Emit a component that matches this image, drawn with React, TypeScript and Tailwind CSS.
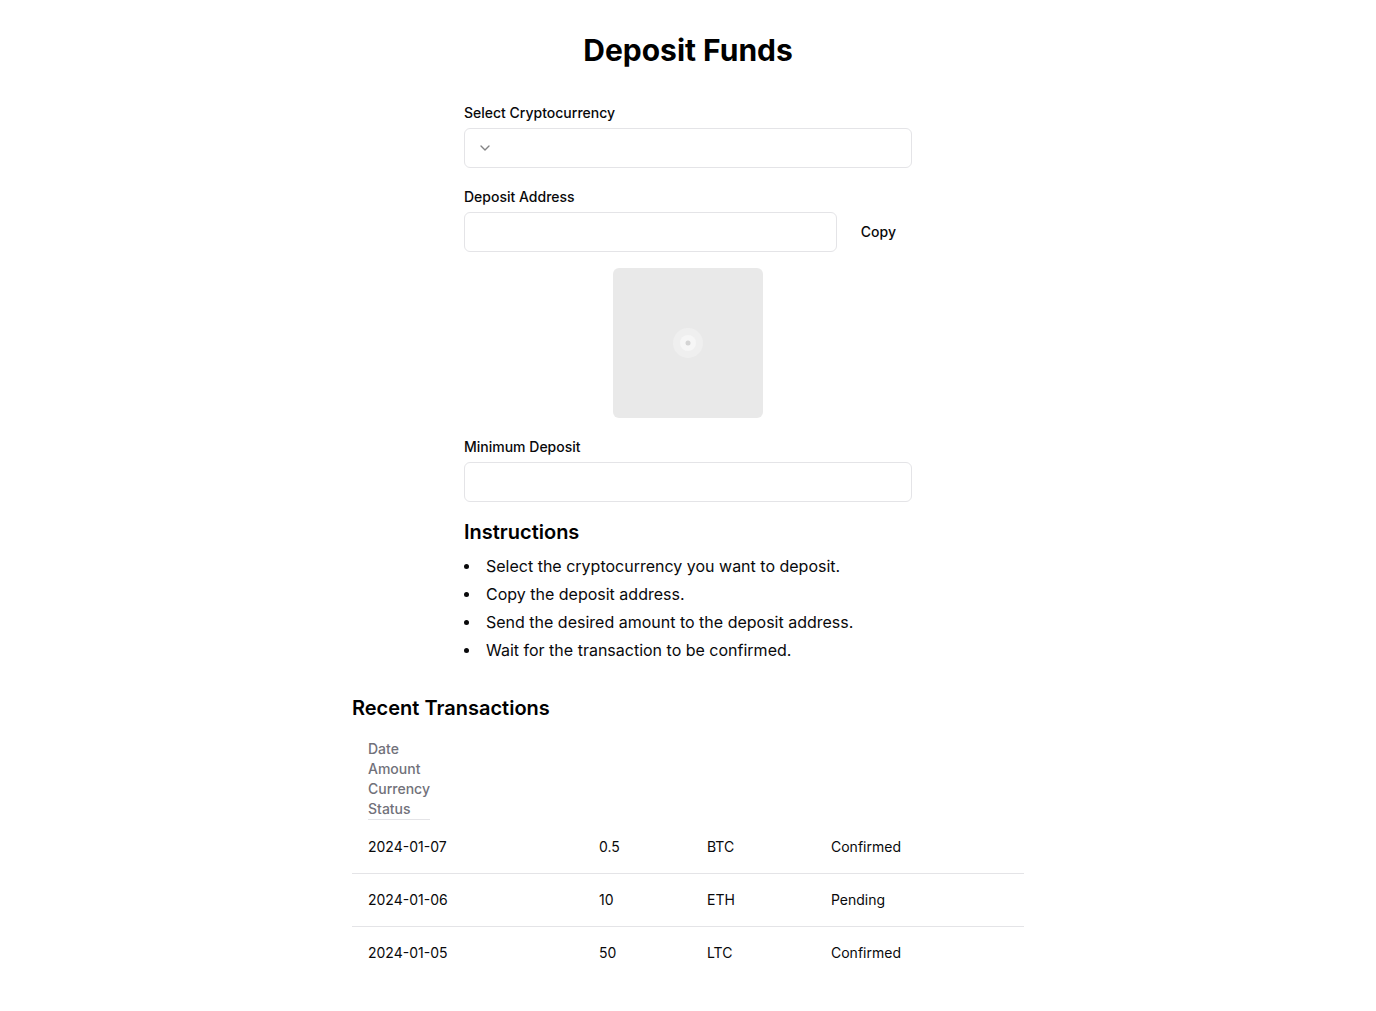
import React from 'react';
import { ChevronDown } from 'lucide-react';

const transactions = [
  { date: '2024-01-07', amount: '0.5', currency: 'BTC', status: 'Confirmed' },
  { date: '2024-01-06', amount: '10', currency: 'ETH', status: 'Pending' },
  { date: '2024-01-05', amount: '50', currency: 'LTC', status: 'Confirmed' },
];

const steps = [
  'Select the cryptocurrency you want to deposit.',
  'Copy the deposit address.',
  'Send the desired amount to the deposit address.',
  'Wait for the transaction to be confirmed.',
];

const Label: React.FC<{ children: React.ReactNode; first?: boolean }> = ({ children, first }) => (
  <label className={`block text-sm leading-5 font-medium text-[#09090b] mb-[5px] ${first ? '' : 'mt-[19px]'}`}>
    {children}
  </label>
);

export default function App() {
  return (
    <div className="min-h-screen bg-white text-[#09090b] font-['Inter','Noto_Sans',sans-serif] pt-8 pb-10">
      <h1 className="text-3xl leading-9 font-bold text-center text-black">Deposit Funds</h1>

      <div className="w-[448px] mx-auto mt-[35px] flex flex-col">
        <Label first>Select Cryptocurrency</Label>
        <button className="h-10 w-full rounded-md border border-[#e4e4e7] bg-white px-3 flex items-center">
          <ChevronDown className="w-4 h-4 text-[#09090b] opacity-50" />
        </button>

        <Label>Deposit Address</Label>
        <div className="flex items-center gap-2">
          <input readOnly className="h-10 flex-1 rounded-md border border-[#e4e4e7] bg-white px-3 text-sm outline-none" />
          <button className="h-10 px-4 rounded-md text-sm font-medium text-[#09090b]">Copy</button>
        </div>

        <div className="mt-4 self-center w-[150px] h-[150px] rounded-md bg-[#e9e9e9] flex items-center justify-center">
          <svg width="34" height="34" viewBox="0 0 34 34">
            <circle cx="17" cy="17" r="15" fill="#efefef" />
            <circle cx="17" cy="17" r="8" fill="#f6f6f6" />
            <circle cx="17" cy="17" r="2.5" fill="#d4d4d4" />
          </svg>
        </div>

        <Label>Minimum Deposit</Label>
        <input readOnly className="h-10 w-full rounded-md border border-[#e4e4e7] bg-white px-3 text-sm outline-none" />

        <h2 className="mt-4 text-xl leading-7 font-semibold text-black">Instructions</h2>
        <ul className="mt-2 space-y-1 text-base leading-6 text-[#09090b]">
          {steps.map((s) => (
            <li key={s} className="flex">
              <span aria-hidden className="w-[22px] shrink-0 flex items-center">
                <span className="block w-[5px] h-[5px] rounded-full bg-[#09090b]" />
              </span>
              <span>{s}</span>
            </li>
          ))}
        </ul>
      </div>

      <div className="w-[672px] mx-auto mt-8">
        <h2 className="text-xl leading-7 font-semibold text-black">Recent Transactions</h2>
        <div className="mt-[14px] mb-px pl-4">
          <div className="inline-flex flex-col text-sm leading-5 text-[#71717a] font-medium border-b border-[#e4e4e7]">
            <span>Date</span>
            <span>Amount</span>
            <span>Currency</span>
            <span>Status</span>
          </div>
        </div>
        <div className="text-sm leading-5">
          {transactions.map((t, i) => (
            <div
              key={t.date}
              className={`grid grid-cols-[231px_108px_124px_1fr] ${i < transactions.length - 1 ? 'border-b border-[#e4e4e7]' : ''}`}
            >
              <div className="p-4">{t.date}</div>
              <div className="p-4">{t.amount}</div>
              <div className="p-4">{t.currency}</div>
              <div className="p-4">{t.status}</div>
            </div>
          ))}
        </div>
      </div>
    </div>
  );
}
